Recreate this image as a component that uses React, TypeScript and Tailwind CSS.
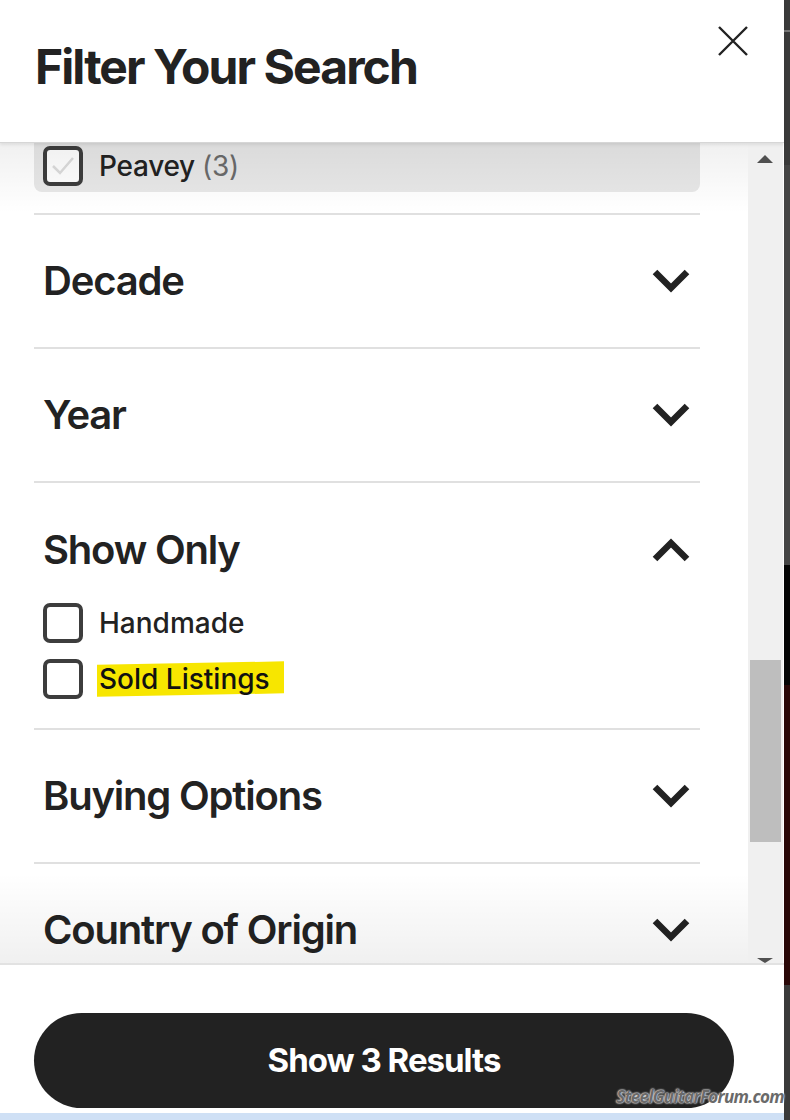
import React from "react";

const font = { fontFamily: "Inter, 'Noto Sans', sans-serif" };

function Chevron({ up = false }: { up?: boolean }) {
  return (
    <svg width="38" height="26" viewBox="0 0 38 26" className="shrink-0">
      <path
        d={up ? "M3 22 L19 6 L35 22" : "M3 4 L19 20 L35 4"}
        fill="none"
        stroke="#222"
        strokeWidth="6.5"
        strokeLinecap="butt"
        strokeLinejoin="miter"
      />
    </svg>
  );
}

function Box({ checked = false }: { checked?: boolean }) {
  return (
    <div className="w-[40px] h-[40px] shrink-0 rounded-[7px] border-[4px] border-[#3d3d3d] bg-white flex items-center justify-center">
      {checked && (
        <svg width="26" height="22" viewBox="0 0 26 22">
          <path d="M3 11 L10 18 L23 3" fill="none" stroke="#dcdcdc" strokeWidth="2.5" />
        </svg>
      )}
    </div>
  );
}

function Section({ title }: { title: string }) {
  return (
    <div className="border-t-2 border-[#e0e0e0] h-[134px] flex items-center justify-between pl-[9px] pr-[10px]">
      <span className="text-[40px] font-semibold tracking-[-0.03em] text-[#222]">{title}</span>
      <Chevron />
    </div>
  );
}

export default function App() {
  return (
    <div className="w-[790px] h-[1120px] flex overflow-hidden bg-black" style={font}>
      <div className="w-[784px] h-full flex flex-col bg-white">
        {/* Header */}
        <div className="h-[143px] shrink-0 flex items-start justify-between pl-[35px] pr-[36px] border-b border-[#d6d6d6] shadow-[0_2px_3px_rgba(0,0,0,0.08)] relative z-10">
          <h1 className="mt-[38px] text-[48px] leading-[58px] font-bold tracking-[-0.04em] text-[#222]">
            Filter Your Search
          </h1>
          <svg width="30" height="30" viewBox="0 0 30 30" className="mt-[26px]">
            <path d="M1 1 L29 29 M29 1 L1 29" stroke="#222" strokeWidth="2.4" fill="none" />
          </svg>
        </div>

        {/* Scroll area */}
        <div className="flex-1 flex min-h-0">
          <div className="relative w-[748px] overflow-hidden">
            <div className="pl-[34px] pr-[48px]">
              <div className="h-[49px] rounded-b-[8px] bg-[#e8e8e8] flex items-center gap-[16px] pl-[9px] pb-[4px]">
                <Box checked />
                <span className="text-[28px] font-medium tracking-[-0.01em] text-[#222]">
                  Peavey <span className="text-[#6b6b6b] font-normal">(3)</span>
                </span>
              </div>
              <div className="h-[21px]" />
              <Section title="Decade" />
              <Section title="Year" />
              <div className="border-t-2 border-[#e0e0e0] pb-[21px]">
                <div className="h-[112px] pt-[45px] flex items-start justify-between pl-[9px] pr-[10px]">
                  <span className="text-[40px] leading-[44px] font-semibold tracking-[-0.03em] text-[#222]">
                    Show Only
                  </span>
                  <div className="mt-[9px]">
                    <Chevron up />
                  </div>
                </div>
                <div className="h-[56px] flex items-center gap-[16px] pl-[9px]">
                  <Box />
                  <span className="text-[28px] font-medium text-[#222]">Handmade</span>
                </div>
                <div className="h-[56px] flex items-center gap-[14px] pl-[9px]">
                  <Box />
                  <span className="text-[28px] leading-[32px] font-medium text-[#111] bg-[#f7e600] px-[2px] -skew-y-[1deg]">
                    <span className="inline-block skew-y-[1deg] pr-[12px]">Sold Listings</span>
                  </span>
                </div>
              </div>
              <Section title="Buying Options" />
              <Section title="Country of Origin" />
            </div>
            <div className="pointer-events-none absolute left-0 right-0 top-0 h-[70px] bg-gradient-to-b from-[rgba(0,0,0,0.06)] to-transparent" />
            <div className="pointer-events-none absolute left-0 right-0 bottom-0 h-[90px] bg-gradient-to-t from-[rgba(0,0,0,0.06)] to-transparent" />
          </div>
          {/* Scrollbar */}
          <div className="w-[35px] bg-[#f0f0f0] relative">
            <div className="absolute left-[9px] top-[12px] w-0 h-0 border-l-[8px] border-r-[8px] border-b-[8px] border-l-transparent border-r-transparent border-b-[#505050]" />
            <div className="absolute left-[2px] top-[517px] w-[31px] h-[182px] bg-[#bebebe]" />
            <div className="absolute left-[9px] bottom-[0px] w-0 h-0 border-l-[8px] border-r-[8px] border-t-[5px] border-l-transparent border-r-transparent border-t-[#505050]" />
          </div>
        </div>

        {/* Footer */}
        <div className="h-[150px] shrink-0 border-t-2 border-[#e2e2e2] pl-[34px] pt-[48px] relative">
          <button className="w-[700px] h-[95px] rounded-full bg-[#222] text-white text-[33px] font-bold tracking-[-0.03em]">
            Show 3 Results
          </button>
          <span
            className="absolute right-[0px] bottom-[4px] text-[17px] italic font-bold text-[#6a6a6a] tracking-[-0.04em]"
            style={{ fontFamily: "'Open Sans', sans-serif", textShadow: "0 0 2px #fff, 0 0 2px #fff" }}
          >
            SteelGuitarForum.com
          </span>
        </div>
        <div className="h-[7px] shrink-0 bg-[#cfe0f5]" />
      </div>
      {/* background page strip */}
      <div className="w-[6px] h-full flex flex-col">
        <div className="h-[30px] bg-[#3a3a3a]" />
        <div className="h-[2px] bg-[#777]" />
        <div className="h-[133px] bg-[#3a3a3a]" />
        <div className="h-[400px] bg-[#454545]" />
        <div className="h-[120px] bg-[#050505]" />
        <div className="h-[300px] bg-[#2a0808]" />
        <div className="flex-1 bg-[#3a3a3a]" />
      </div>
    </div>
  );
}
